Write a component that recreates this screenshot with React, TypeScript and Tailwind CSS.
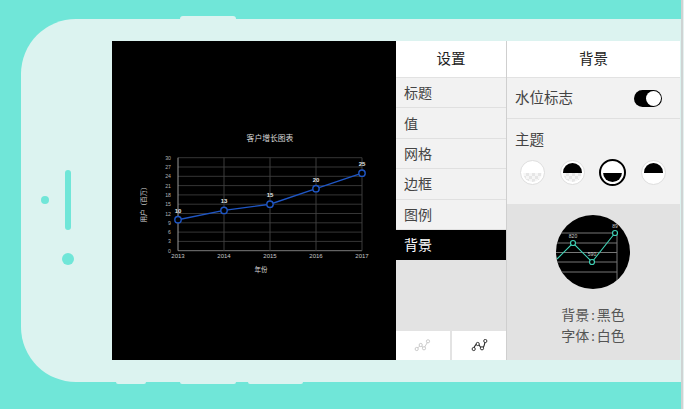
import React from 'react';

const FONT = "font-['Lato','Noto_Sans_CJK_SC',sans-serif]";

const MENU = ['标题', '值', '网格', '边框', '图例'];
const YEARS = ['2013', '2014', '2015', '2016', '2017'];
const VALUES = [10, 13, 15, 20, 25];

function yFor(v: number) {
    return 250.7 - v * 3.1;
}

function xFor(i: number) {
    return 178 + i * 46;
}

function Chart() {
    const ticks = Array.from({ length: 11 }, (_, i) => i * 3);
    const line = VALUES.map((v, i) => `${xFor(i)},${yFor(v)}`).join(' ');
    return (
        <svg width="284" height="319" viewBox="112 41 284 319" className="block">
            <text x="270" y="141" textAnchor="middle" fontSize="7.8" fill="#d8d8d8" fontFamily="Noto Sans CJK SC">客户增长图表</text>
            <text x="261" y="271.5" textAnchor="middle" fontSize="6.5" fill="#d8d8d8" fontFamily="Noto Sans CJK SC">年份</text>
            <text transform="translate(146 203) rotate(-90)" x="0" y="0" textAnchor="middle" fontSize="6.5" fill="#d8d8d8" fontFamily="Noto Sans CJK SC">用户（百万）</text>
            {ticks.map((t) => (
                <g key={t}>
                    <line x1="178" x2="362" y1={yFor(t)} y2={yFor(t)} stroke={t === 0 ? '#888' : '#3c3c3c'} strokeWidth="0.9" />
                    <text x="171" y={yFor(t) + 2} textAnchor="end" fontSize="5.2" fill="#b4b4b4" fontFamily="Liberation Sans">{t}</text>
                </g>
            ))}
            {YEARS.map((y, i) => (
                <g key={y}>
                    <line x1={xFor(i)} x2={xFor(i)} y1="157.7" y2="250.7" stroke={i === 0 ? '#aaa' : '#444'} strokeWidth="0.9" />
                    <text x={xFor(i)} y="258" textAnchor="middle" fontSize="6" fill="#c8c8c8" fontFamily="Liberation Sans">{y}</text>
                </g>
            ))}
            <polyline points={line} fill="none" stroke="#1f56c4" strokeWidth="1.4" />
            {VALUES.map((v, i) => (
                <g key={i}>
                    <circle cx={xFor(i)} cy={yFor(v)} r="3.2" fill="#000" stroke="#1f56c4" strokeWidth="1.4" />
                    <text x={xFor(i)} y={yFor(v) - 7} textAnchor="middle" fontSize="6" fontWeight="700" fill="#e4e4e4" fontFamily="Liberation Sans">{v}</text>
                </g>
            ))}
        </svg>
    );
}

function LineIcon() {
    return (
        <svg width="18" height="14" viewBox="0 0 18 14" fill="none">
            <path d="M2.7 10 L6.7 6 L10 9.3 L14 2.3" stroke="#aaa" strokeWidth="0.6" />
            {[[2.7, 10], [6.7, 6], [10, 9.3], [14, 2.3]].map(([x, y]) => (
                <circle key={x} cx={x} cy={y} r="1.6" fill="#fff" stroke="#aaa" strokeWidth="0.6" />
            ))}
        </svg>
    );
}

function CurveIcon() {
    return (
        <svg width="18" height="14" viewBox="0 0 18 14" fill="none">
            <path d="M3.7 10 C4.5 7 6 5 7.7 5 C9.5 5 10 9.3 12 9.3 C14 9.3 14.5 5 15.3 2" stroke="#222" strokeWidth="1.1" />
            {[[3.7, 10], [7.7, 5], [12, 9.3], [15.3, 2]].map(([x, y]) => (
                <circle key={x} cx={x} cy={y} r="1.6" fill="#fff" stroke="#222" strokeWidth="0.9" />
            ))}
        </svg>
    );
}

function Preview() {
    return (
        <svg width="74" height="74" viewBox="0 0 74 74" className="rounded-full bg-black">
            {[18, 28, 37.5, 47, 57].map((y) => (
                <line key={y} x1="0" x2="61" y1={y} y2={y} stroke="#777" strokeWidth="1" />
            ))}
            <line x1="61" x2="61" y1="18" y2="66" stroke="#777" strokeWidth="1" />
            <polyline points="1,44 17,28 36,47 59,18" fill="none" stroke="#3fd0b5" strokeWidth="1.1" />
            {[[17, 28], [36, 47], [59, 18]].map(([x, y]) => (
                <circle key={x} cx={x} cy={y} r="2.5" fill="#000" stroke="#3fd0b5" strokeWidth="1.2" />
            ))}
            <text x="17" y="23" textAnchor="middle" fontSize="5" fill="#ccc" fontFamily="Liberation Sans">820</text>
            <text x="36" y="41" textAnchor="middle" fontSize="5" fill="#ccc" fontFamily="Liberation Sans">590</text>
            <text x="59" y="13" textAnchor="middle" fontSize="5" fill="#ccc" fontFamily="Liberation Sans">89</text>
        </svg>
    );
}

// half-and-half swatches for the theme row
function ThemeSwatch(props: { top: string; bottom: string; checked?: boolean; selected?: boolean }) {
    const bottomClass = props.checked
        ? 'bg-[conic-gradient(#e6e6e6_25%,#f6f6f6_0_50%,#e6e6e6_0_75%,#f6f6f6_0)] bg-[length:6px_6px]'
        : props.bottom;
    const ring = props.selected
        ? 'w-[27px] h-[27px] border-2 border-black p-[2px]'
        : 'w-[25px] h-[25px] border border-[#dedede] p-[2px]';
    return (
        <div className={`rounded-full bg-white flex-none ${ring}`}>
            <div className="w-full h-full rounded-full overflow-hidden flex flex-col">
                <div className={`flex-1 ${props.top}`} />
                <div className={`flex-1 ${bottomClass}`} />
            </div>
        </div>
    );
}

export default function App() {
    return (
        <div className={`flex w-[684px] h-[409px] overflow-hidden ${FONT}`}>
            <div className="w-[681px] h-full flex-none bg-[#70e6d8] pt-[19px] pl-[21px]">
                <div className="relative flex w-[660px] h-[363px] rounded-l-[55px] bg-[#dcf3f0]">
                    {/* hardware buttons */}
                    <div className="absolute left-[159px] top-[-3px] w-[56px] h-[3px] rounded-t-sm bg-[#dcf3f0]" />
                    <div className="absolute left-[95px] bottom-[-2px] w-[30px] h-[2px] rounded-b-sm bg-[#dcf3f0]" />
                    <div className="absolute left-[159px] bottom-[-2px] w-[56px] h-[2px] rounded-b-sm bg-[#dcf3f0]" />
                    <div className="absolute left-[227px] bottom-[-2px] w-[55px] h-[2px] rounded-b-sm bg-[#dcf3f0]" />

                    {/* left bezel */}
                    <div className="relative w-[91px] flex-none">
                        <div className="absolute left-[20px] top-[177px] w-[8px] h-[8px] rounded-full bg-[#70e6d8]" />
                        <div className="absolute left-[44px] top-[151px] w-[6px] h-[60px] rounded-full bg-[#70e6d8]" />
                        <div className="absolute left-[41px] top-[234px] w-[12px] h-[12px] rounded-full bg-[#70e6d8]" />
                    </div>

                    <div className="flex mt-[22px] h-[319px]">
                        <div className="w-[284px] h-full bg-black flex-none">
                            <Chart />
                        </div>

                        {/* settings menu */}
                        <div className="w-[111px] h-full flex flex-col flex-none bg-[#e3e3e3] border-r border-[#cfcfcf]">
                            <div className="h-[37px] flex items-center justify-center bg-white text-[14.5px] text-[#222] border-b border-[#e2e2e2]">设置</div>
                            {MENU.map((m) => (
                                <div key={m} className="h-[30.4px] flex items-center pl-[8px] bg-[#f2f2f2] text-[14px] text-[#444] border-b border-[#e0e0e0]">{m}</div>
                            ))}
                            <div className="h-[30px] flex items-center pl-[8px] bg-black text-[14px] text-white">背景</div>
                            <div className="flex-1" />
                            <div className="h-[29px] flex gap-[2px]">
                                <div className="flex-1 flex items-center justify-center bg-white"><LineIcon /></div>
                                <div className="flex-1 flex items-center justify-center bg-white"><CurveIcon /></div>
                            </div>
                        </div>

                        {/* background panel */}
                        <div className="w-[173px] h-full flex flex-col flex-none">
                            <div className="h-[37px] flex items-center justify-center bg-white text-[14.5px] text-[#222] border-b border-[#e2e2e2]">背景</div>
                            <div className="h-[41px] flex items-center justify-between pl-[8px] pr-[18px] bg-[#f2f2f2] text-[14.5px] text-[#444] border-b border-[#e0e0e0]">
                                <span>水位标志</span>
                                <div className="w-[28px] h-[17px] rounded-full bg-black flex items-center justify-end pr-[1px]">
                                    <div className="w-[15px] h-[15px] rounded-full bg-white" />
                                </div>
                            </div>
                            <div className="h-[85px] flex flex-col bg-[#f2f2f2] pt-[10px] text-[14.5px] text-[#444]">
                                <div className="pl-[8px] leading-[22px]">主题</div>
                                <div className="flex items-center justify-between pl-[13px] pr-[14px] h-[27px] mt-[8px]">
                                    <ThemeSwatch top="bg-white" bottom="" checked />
                                    <ThemeSwatch top="bg-black" bottom="" checked />
                                    <ThemeSwatch top="bg-white" bottom="bg-black" selected />
                                    <ThemeSwatch top="bg-black" bottom="bg-white" />
                                </div>
                            </div>
                            <div className="flex-1 flex flex-col items-center bg-[#e2e2e2] pt-[11px] pr-[1px]">
                                <Preview />
                                <div className="mt-[15px] text-[14px] leading-[21px] text-[#555] [word-spacing:-1.5px]">背景 : 黑色</div>
                                <div className="text-[14px] leading-[21px] text-[#555] [word-spacing:-1.5px]">字体 : 白色</div>
                            </div>
                        </div>
                    </div>
                </div>
            </div>
            {/* edge of the source image */}
            <div className="flex-1 bg-[#cfd3d3] border-r border-[#e4f0ef]" />
        </div>
    );
}
